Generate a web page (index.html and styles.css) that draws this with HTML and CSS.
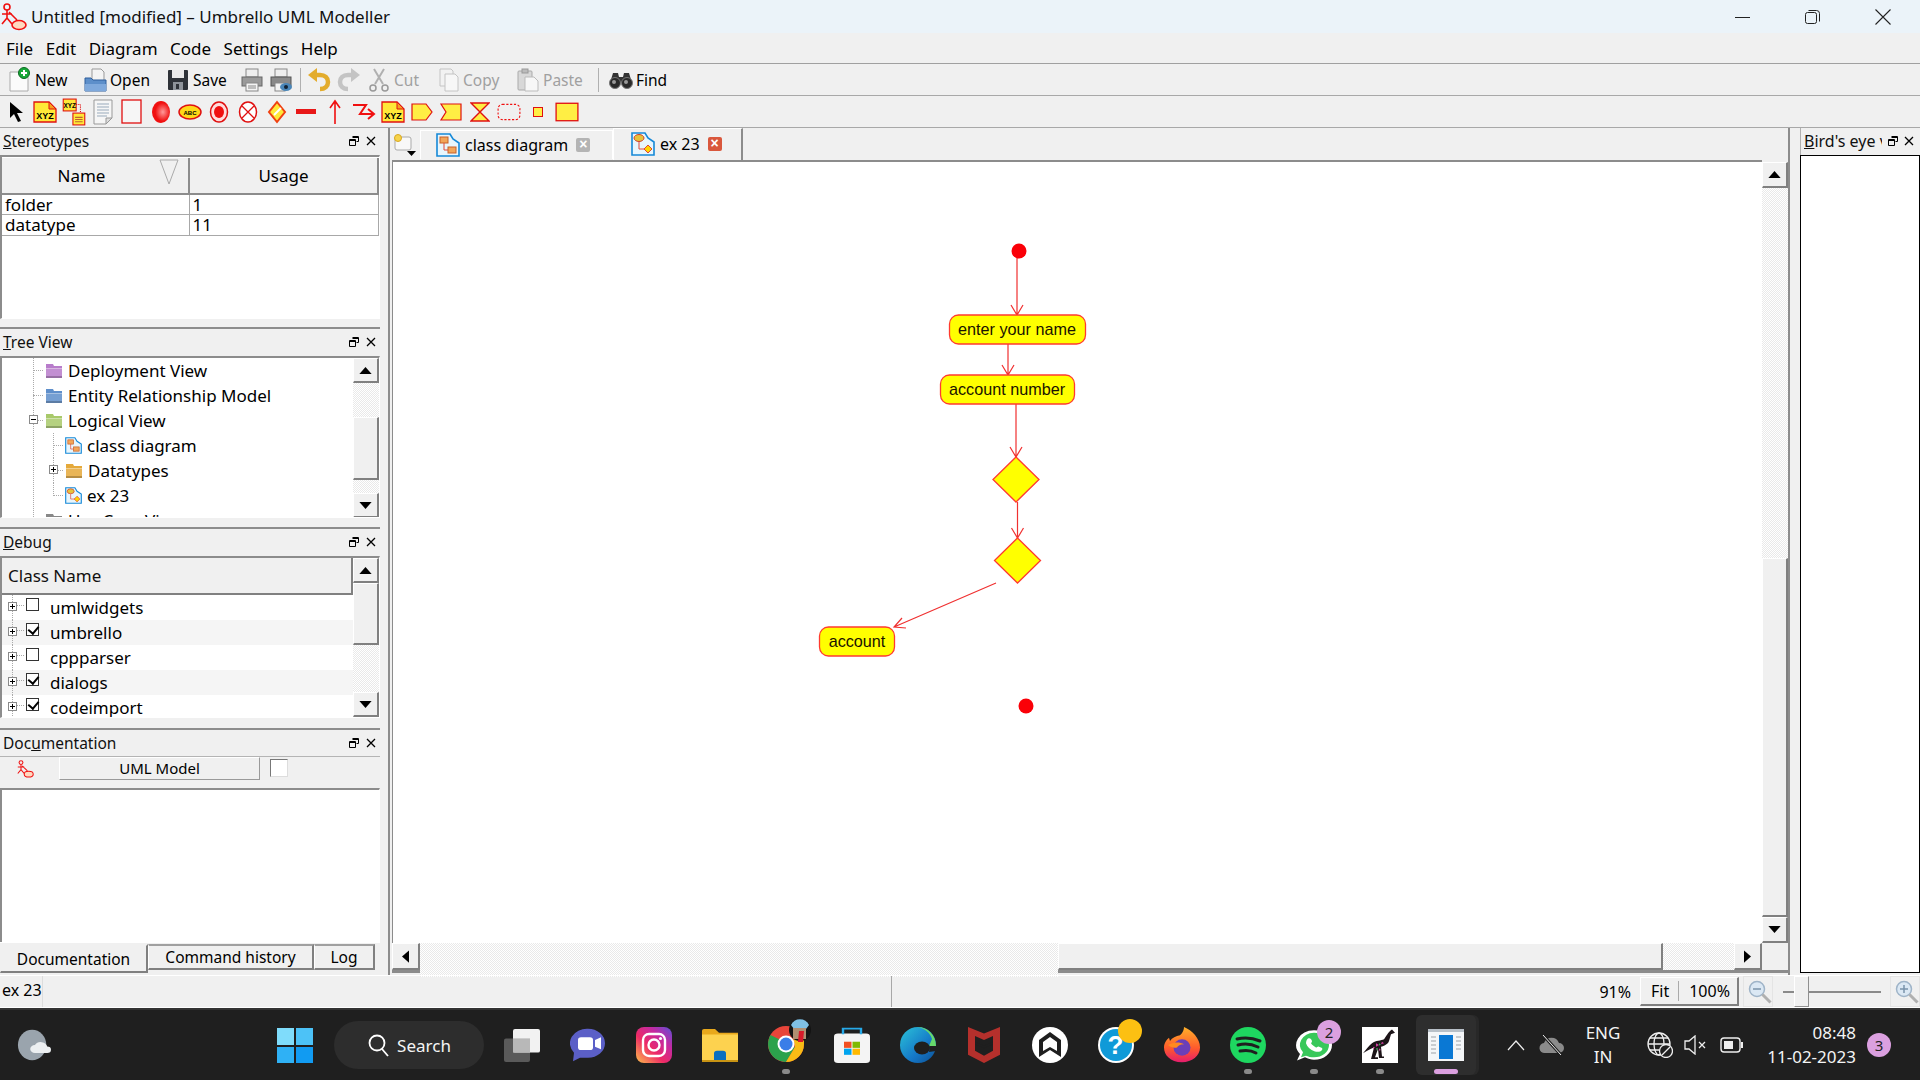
FILE: index.html
```html
<!DOCTYPE html>
<html lang="en">
<head>
<meta charset="UTF-8" />
<title>Untitled [modified] – Umbrello UML Modeller</title>
<link rel="stylesheet" href="styles.css">
</head>
<body>

<svg class="defs" width="0" height="0">
  <symbol id="logo" viewBox="0 0 26 28">
    <g fill="none" stroke="#f01010" stroke-width="1.6">
      <circle cx="6" cy="4" r="3"/>
      <path d="M6 7v8M1 11h10M6 15l-5 6M6 15l5 6M8 9l8 8"/>
      <ellipse cx="18" cy="22" rx="7" ry="4.5" fill="#ffd9c0"/>
    </g>
  </symbol>
  <symbol id="folder" viewBox="0 0 18 16">
    <path d="M1 1h7l1 2h8v12H1z" fill="currentColor"/>
    <path d="M1 5h16v1H1z" fill="#fff" opacity=".45"/>
    <path d="M1 6h16v9H1z" fill="#fff" opacity=".15"/>
    <path d="M1 13h16v2H1z" fill="#000" opacity=".22"/>
  </symbol>
  <symbol id="diagram-a" viewBox="0 0 24 24">
    <path d="M1 1h13l3 5 6 4v13H1z" fill="#e8f6fd" stroke="#1689d8" stroke-width="1.6"/>
    <rect x="4" y="4" width="8" height="6" fill="#f2a65a" stroke="#c8602a"/>
    <rect x="12" y="14" width="8" height="6" fill="#f2a65a" stroke="#c8602a"/>
    <path d="M8 10v7h4" fill="none" stroke="#e0483a"/>
  </symbol>
  <symbol id="diagram-b" viewBox="0 0 24 24">
    <path d="M1 1h13l3 5 6 4v13H1z" fill="#e8f6fd" stroke="#1689d8" stroke-width="1.6"/>
    <ellipse cx="8" cy="6" rx="5" ry="3.5" fill="#e6c23c" stroke="#d0402a"/>
    <path d="M8 10v7h6" fill="none" stroke="#e0483a"/>
    <path d="M17 13l4 4-4 4-4-4z" fill="#ffd400" stroke="#e0483a"/>
  </symbol>
  <symbol id="note" viewBox="0 0 24 22">
    <path d="M1 1h15l7 7v13H1z" fill="#ffe838" stroke="#e01010" stroke-width="1.300"/>
    <path d="M16 1v7h7z" fill="#f7a020" stroke="#e01010"/>
  </symbol>
  <symbol id="up" viewBox="0 0 14 8"><path d="M7 0l7 8H0z" fill="#000"/></symbol>
  <symbol id="float" viewBox="0 0 10 10">
    <path d="M3.500 .5h6v5h-2M.5 3.500h6v6h-6zM.5 4.500h6M3.500 1.500h6" fill="none" stroke="#000"/>
  </symbol>
  <symbol id="close" viewBox="0 0 10 10">
    <path d="M1 1l8 8M9 1l-8 8" fill="none" stroke="#000" stroke-width="1.300"/>
  </symbol>
</svg>

<header class="titlebar">
  <svg class="title-logo"><use href="#logo"/></svg>
  <span class="title-text">Untitled [modified] – Umbrello UML Modeller</span>
  <div class="win-controls">
    <svg width="16" height="16" viewBox="0 0 16 16"><path d="M0 8.500h15" stroke="#222"/></svg>
    <svg width="16" height="16" viewBox="0 0 16 16"><rect x=".5" y="3.500" width="11" height="11" rx="2" fill="none" stroke="#222"/><path d="M3.500 1.500h8a3 3 0 0 1 3 3v8" fill="none" stroke="#222"/></svg>
    <svg width="16" height="16" viewBox="0 0 16 16"><path d="M.5.500l15 15M15.500.500l-15 15" stroke="#222" stroke-width="1.100"/></svg>
  </div>
</header>

<nav class="menubar">
  <span>File</span><span>Edit</span><span>Diagram</span><span>Code</span><span>Settings</span><span>Help</span>
</nav>

<div class="toolbar main-tools">
  <div class="tool tool-new">
    <svg width="24" height="26" viewBox="0 0 24 26"><path d="M2 5h13l5 5v14H2z" fill="#fbfbfb" stroke="#aaa"/><circle cx="16" cy="6" r="5.500" fill="#18a838" stroke="#0a6a20"/><path d="M16 3v6M13 6h6" stroke="#fff" stroke-width="2"/></svg>
    <span>New</span>
  </div>
  <div class="tool tool-open">
    <svg width="24" height="24" viewBox="0 0 24 24"><path d="M8 1h9l3 3v10H8z" fill="#f4f4f4" stroke="#999"/><path d="M1 10h6l2 2h13v11H1z" fill="#5d8fca" stroke="#2f5f9c"/><path d="M1 16h21v7H1z" fill="#7fa9dc"/></svg>
    <span>Open</span>
  </div>
  <div class="tool tool-save">
    <svg width="22" height="22" viewBox="0 0 22 22"><rect x="1" y="1" width="20" height="20" rx="1" fill="#2e3238"/><rect x="5" y="1" width="12" height="8" fill="#e9e9e9"/><rect x="6" y="13" width="10" height="8" fill="#8e939a"/><rect x="9" y="15" width="3" height="5" fill="#2e3238"/></svg>
    <span>Save</span>
  </div>
  <svg class="tool-icon print-one" width="22" height="24" viewBox="0 0 22 24"><rect x="5" y="1" width="12" height="8" fill="#eee" stroke="#888"/><rect x="1" y="9" width="20" height="9" fill="#9a9a9a" stroke="#666"/><rect x="5" y="15" width="12" height="8" fill="#f4f4f4" stroke="#888"/><path d="M7 18h8M7 20h8" stroke="#888"/></svg>
  <svg class="tool-icon print-two" width="22" height="24" viewBox="0 0 22 24"><rect x="5" y="1" width="12" height="8" fill="#eee" stroke="#888"/><rect x="1" y="9" width="20" height="9" fill="#8a8a8a" stroke="#555"/><rect x="5" y="15" width="10" height="8" fill="#f4f4f4" stroke="#888"/><ellipse cx="16" cy="19" rx="6" ry="4" fill="#4a86b8"/><circle cx="16" cy="19" r="2" fill="#123"/></svg>
  <i class="tool-sep sep-one"></i>
  <svg class="tool-icon undo" width="24" height="24" viewBox="0 0 24 24"><path d="M7 7h6c5 0 8 3 8 7s-3 7-8 7" fill="none" stroke="#e3ac2c" stroke-width="4.500"/><path d="M10 0L1 7l9 7z" fill="#e3ac2c"/></svg>
  <svg class="tool-icon redo" width="24" height="24" viewBox="0 0 24 24"><path d="M17 7h-6c-5 0-8 3-8 7s3 7 8 7" fill="none" stroke="#c4c4c4" stroke-width="4.500"/><path d="M14 0l9 7-9 7z" fill="#c4c4c4"/></svg>
  <div class="tool tool-cut disabled">
    <svg width="22" height="24" viewBox="0 0 22 24"><path d="M6 1l9 15M16 1L7 16" stroke="#b0b0b0" stroke-width="2"/><circle cx="5" cy="20" r="3" fill="none" stroke="#999" stroke-width="1.500"/><circle cx="17" cy="20" r="3" fill="none" stroke="#999" stroke-width="1.500"/></svg>
    <span>Cut</span>
  </div>
  <div class="tool tool-copy disabled">
    <svg width="20" height="24" viewBox="0 0 20 24"><path d="M1 1h11l2 2v15H1z" fill="#f2f2f2" stroke="#c4c4c4"/><path d="M6 6h10l3 3v14H6z" fill="#f7f7f7" stroke="#c4c4c4"/></svg>
    <span>Copy</span>
  </div>
  <div class="tool tool-paste disabled">
    <svg width="22" height="24" viewBox="0 0 22 24"><rect x="1" y="3" width="14" height="19" rx="1" fill="#d8d8d8" stroke="#aaa"/><rect x="5" y="1" width="6" height="4" fill="#bbb" stroke="#999"/><path d="M8 9h9l4 4v10H8z" fill="#f7f7f7" stroke="#bbb"/></svg>
    <span>Paste</span>
  </div>
  <i class="tool-sep sep-two"></i>
  <div class="tool tool-find">
    <svg width="24" height="20" viewBox="0 0 24 20"><path d="M4 3h5l1 4h4l1-4h5l3 10H1z" fill="#333"/><circle cx="6" cy="13" r="5.500" fill="#2a2a2a" stroke="#777"/><circle cx="18" cy="13" r="5.500" fill="#2a2a2a" stroke="#777"/><circle cx="5" cy="12" r="2" fill="#999"/><circle cx="17" cy="12" r="2" fill="#999"/></svg>
    <span>Find</span>
  </div>
</div>

<div class="toolbar shape-tools">
  <b class="shape"><svg width="16" height="22" viewBox="0 0 16 22"><path d="M2 1v16l4-4 4 8 3-1-4-8h6z" fill="#000"/></svg></b>
  <b class="shape"><svg width="24" height="22" viewBox="0 0 24 22"><use href="#note" width="24" height="22"/><text x="12" y="18" class="xyz">XYZ</text></svg></b>
  <b class="shape"><svg width="24" height="28" viewBox="0 0 22 26"><rect x="1" y="1" width="12" height="11" fill="#ffe838" stroke="#e01010"/><text x="7" y="9.500" class="xyz small">XYZ</text><path d="M13 6h4v8" fill="none" stroke="#e01010" stroke-dasharray="1 1"/><rect x="10" y="14" width="11" height="11" fill="#ffe838" stroke="#e01010"/><path d="M12 18h7M12 20h7M12 22h7" stroke="#c06030"/></svg></b>
  <b class="shape"><svg width="20" height="26" viewBox="0 0 20 26"><path d="M1 1h18v18l-6 6H1z" fill="#f6f6f6" stroke="#999"/><path d="M4 5h12M4 8h12M4 11h12M4 14h12M4 17h10" stroke="#9ab"/><path d="M13 25v-6h6z" fill="#ddd" stroke="#999"/></svg></b>
  <b class="shape"><svg width="21" height="25" viewBox="0 0 21 25"><rect x="1" y="1" width="19" height="23" fill="#f6f6f6" stroke="#e01010" stroke-width="1.300"/></svg></b>
  <b class="shape"><svg width="20" height="24" viewBox="0 0 20 24"><defs><radialGradient id="ball" cx=".6" cy=".5" r=".7"><stop offset="0" stop-color="#ff9a9a"/><stop offset=".6" stop-color="#f01010"/></radialGradient></defs><ellipse cx="10" cy="12" rx="9" ry="11" fill="url(#ball)"/></svg></b>
  <b class="shape"><svg width="24" height="16" viewBox="0 0 24 16"><ellipse cx="12" cy="8" rx="11" ry="7" fill="#ffd818" stroke="#e01010" stroke-width="1.500"/><text x="12" y="10.500" class="xyz small">ABC</text></svg></b>
  <b class="shape"><svg width="20" height="22" viewBox="0 0 20 22"><ellipse cx="10" cy="11" rx="8.500" ry="10" fill="#fdd" stroke="#e01010" stroke-width="1.500"/><ellipse cx="10" cy="11" rx="5" ry="6" fill="#f01010"/></svg></b>
  <b class="shape"><svg width="20" height="22" viewBox="0 0 20 22"><ellipse cx="10" cy="11" rx="8.500" ry="10" fill="#fff" stroke="#e01010" stroke-width="1.500"/><path d="M4 5l12 12M16 5L4 17" stroke="#e01010" stroke-width="1.300"/></svg></b>
  <b class="shape"><svg width="20" height="24" viewBox="0 0 20 24"><path d="M10 2l8 10-8 10-8-10z" fill="#ffe838" stroke="#f04010" stroke-width="2"/><path d="M7 15l7-7" stroke="#fff" stroke-width="2"/></svg></b>
  <b class="shape"><svg width="22" height="8" viewBox="0 0 22 8"><rect x="1" y="1" width="20" height="5" fill="#e81818"/></svg></b>
  <b class="shape"><svg width="12" height="26" viewBox="0 0 12 26"><path d="M6 25V2M1 9l5-7 5 7" fill="none" stroke="#f01010" stroke-width="1.600"/></svg></b>
  <b class="shape"><svg width="24" height="18" viewBox="0 0 24 18"><path d="M1 2h13l-6 9h14M16 6l6 5-6 5" fill="none" stroke="#f01010" stroke-width="2"/></svg></b>
  <b class="shape"><svg width="24" height="22" viewBox="0 0 24 22"><use href="#note" width="24" height="22"/><text x="12" y="18" class="xyz">XYZ</text></svg></b>
  <b class="shape"><svg width="24" height="18" viewBox="0 0 22 18"><path d="M1 1h14l6 8-6 8H1z" fill="#ffee44" stroke="#e01010" stroke-width="1.200"/></svg></b>
  <b class="shape"><svg width="24" height="18" viewBox="0 0 22 18"><path d="M1 1h20v16H1l5-8z" fill="#ffee44" stroke="#e01010" stroke-width="1.200"/></svg></b>
  <b class="shape"><svg width="20" height="20" viewBox="0 0 20 20"><path d="M1 1h18L1 19h18z" fill="#ffee44" stroke="#e01010" stroke-width="1.400"/></svg></b>
  <b class="shape"><svg width="24" height="18" viewBox="0 0 22 16"><rect x="1" y="1" width="20" height="14" rx="4" fill="none" stroke="#f01010" stroke-dasharray="2 1.500"/></svg></b>
  <b class="shape"><svg width="10" height="10" viewBox="0 0 10 10"><rect x=".5" y=".5" width="9" height="9" fill="#ffee44" stroke="#e01010"/></svg></b>
  <b class="shape"><svg width="24" height="20" viewBox="0 0 22 18"><rect x="1" y="1" width="20" height="16" fill="#ffee44" stroke="#e01010" stroke-width="1.200"/></svg></b>
</div>

<div class="workspace">
  <aside class="left-docks">
    <section class="dock dock-first">
      <div class="dock-title"><span><u>S</u>tereotypes</span><svg><use href="#float"/></svg><svg><use href="#close"/></svg></div>
      <div class="dock-box stereo-box">
        <table class="stereo-table">
          <tr class="stereo-head"><th class="col-name">Name<svg class="sort-mark" width="20" height="26" viewBox="0 0 20 26"><path d="M1 1h18L10 25z" fill="none" stroke="#aaa"/></svg></th><th>Usage</th></tr>
          <tr><td>folder</td><td>1</td></tr>
          <tr><td>datatype</td><td>11</td></tr>
        </table>
      </div>
    </section>

    <section class="dock dock-tree">
      <div class="dock-title"><span><u>T</u>ree View</span><svg><use href="#float"/></svg><svg><use href="#close"/></svg></div>
      <div class="dock-box list-box">
        <div class="tree">
          <div class="tree-row"><svg class="folder purple"><use href="#folder"/></svg>Deployment View</div>
          <div class="tree-row"><svg class="folder blue"><use href="#folder"/></svg>Entity Relationship Model</div>
          <div class="tree-row"><i class="expander minus"></i><svg class="folder green"><use href="#folder"/></svg>Logical View</div>
          <div class="tree-row child"><svg class="diagram"><use href="#diagram-a"/></svg>class diagram</div>
          <div class="tree-row child"><i class="expander plus"></i><svg class="folder orange"><use href="#folder"/></svg>Datatypes</div>
          <div class="tree-row child last"><svg class="diagram"><use href="#diagram-b"/></svg>ex 23</div>
          <div class="tree-row cut-off"><svg class="folder grey"><use href="#folder"/></svg>Use Case View</div>
        </div>
        <div class="vscroll tree-scroll">
          <div class="sb-btn"><svg class="arrow"><use href="#up"/></svg></div>
          <div class="trough"></div>
          <div class="sb-thumb"></div>
          <div class="trough small"></div>
          <div class="sb-btn"><svg class="arrow flip"><use href="#up"/></svg></div>
        </div>
      </div>
    </section>

    <section class="dock dock-debug">
      <div class="dock-title"><span><u>D</u>ebug</span><svg><use href="#float"/></svg><svg><use href="#close"/></svg></div>
      <div class="dock-box list-box">
        <div class="debug-list">
          <div class="debug-head">Class Name</div>
          <div class="debug-row"><i class="expander plus"></i><i class="check"></i>umlwidgets</div>
          <div class="debug-row alt"><i class="expander plus"></i><i class="check on"></i>umbrello</div>
          <div class="debug-row"><i class="expander plus"></i><i class="check"></i>cppparser</div>
          <div class="debug-row alt"><i class="expander plus"></i><i class="check on"></i>dialogs</div>
          <div class="debug-row"><i class="expander plus"></i><i class="check on"></i>codeimport</div>
        </div>
        <div class="vscroll debug-scroll">
          <div class="sb-btn"><svg class="arrow"><use href="#up"/></svg></div>
          <div class="sb-thumb"></div>
          <div class="trough"></div>
          <div class="sb-btn"><svg class="arrow flip"><use href="#up"/></svg></div>
        </div>
      </div>
    </section>

    <section class="dock dock-doc">
      <div class="dock-title"><span>Doc<u>u</u>mentation</span><svg><use href="#float"/></svg><svg><use href="#close"/></svg></div>
      <div class="doc-head">
        <svg class="doc-logo"><use href="#logo"/></svg>
        <div class="doc-name">UML Model</div>
        <i class="doc-check"></i>
      </div>
      <div class="dock-box doc-box"></div>
    </section>

    <div class="bottom-tabs">
      <span class="btab active">Documentation</span>
      <span class="btab tab-cmd">Command history</span>
      <span class="btab tab-log">Log</span>
    </div>
  </aside>

  <main class="central">
    <div class="tabbar">
      <div class="new-tab">
        <svg width="26" height="24" viewBox="0 0 26 24"><rect x="3" y="4" width="16" height="13" rx="2" fill="#f8f8f8" stroke="#aaa"/><circle cx="6" cy="5" r="3.500" fill="#f6d34a" stroke="#d8a820"/><path d="M15 18h9l-4.500 5z" fill="#000"/></svg>
      </div>
      <div class="dtab dtab-one">
        <svg class="tab-icon"><use href="#diagram-a"/></svg>
        <span>class diagram</span>
        <i class="tab-close"></i>
      </div>
      <div class="dtab dtab-two">
        <svg class="tab-icon"><use href="#diagram-b"/></svg>
        <span>ex 23</span>
        <i class="tab-close red"></i>
      </div>
    </div>
    <div class="view-grid">
      <div class="canvas">
        <svg class="diagram-svg" viewBox="392 160 1370 783">
          <g class="edges">
            <path d="M1017 258V315M1011 305l6 10 6-10"/>
            <path d="M1008 344V375M1002 365l6 10 6-10"/>
            <path d="M1016 404V457M1010 447l6 10 6-10"/>
            <path d="M1017.500 502V538M1011.500 528l6 10 6-10"/>
            <path d="M996 583L894 627M902 618l-8 9 12 1"/>
          </g>
          <circle class="dot" cx="1019" cy="251" r="7.500"/>
          <circle class="dot" cx="1026" cy="706" r="7.500"/>
          <rect class="node" x="949.500" y="315" width="136" height="29" rx="9"/>
          <text class="node-label" x="1017" y="335">enter your name</text>
          <rect class="node" x="940.500" y="375" width="134" height="29" rx="9"/>
          <text class="node-label" x="1007" y="395">account number</text>
          <path class="node" d="M1016 457l23 22.500-23 22.500-23-22.500z"/>
          <path class="node" d="M1017.500 538l23 22.500-23 22.500-23-22.500z"/>
          <rect class="node" x="819.500" y="627" width="75" height="29" rx="9"/>
          <text class="node-label" x="857" y="647">account</text>
        </svg>
      </div>
      <div class="vscroll view-vscroll">
        <div class="sb-btn"><svg class="arrow"><use href="#up"/></svg></div>
        <div class="trough grow"></div>
        <div class="sb-thumb view-thumb"></div>
        <div class="sb-btn"><svg class="arrow flip"><use href="#up"/></svg></div>
      </div>
      <div class="hscroll">
        <div class="sb-btn"><svg class="arrow rot-left"><use href="#up"/></svg></div>
        <div class="trough grow"></div>
        <div class="sb-thumb h-thumb"></div>
        <div class="trough h-end"></div>
        <div class="sb-btn"><svg class="arrow rot-right"><use href="#up"/></svg></div>
      </div>
    </div>
  </main>

  <aside class="birds-eye">
    <div class="dock-title"><span class="bird-text"><u>B</u>ird's eye view</span><svg><use href="#float"/></svg><svg><use href="#close"/></svg></div>
    <div class="bird-box"></div>
  </aside>
</div>

<footer class="statusbar">
  <span class="status-msg">ex 23</span>
  <span class="status-mid"><span class="zoom-pct">91%</span></span>
  <div class="zoom-buttons"><span class="zb-fit">Fit</span><span>100%</span></div>
  <span class="mag">
    <svg width="26" height="26" viewBox="0 0 26 26"><circle cx="10" cy="10" r="7.500" fill="#dbe8f4" stroke="#9fb4c8" stroke-width="1.500"/><path d="M6 10h8" stroke="#7a93aa" stroke-width="1.500"/><path d="M15.500 15.500l8 8" stroke="#b0b0b0" stroke-width="3"/></svg>
  </span>
  <div class="zoom-slider"><i class="slider-line"></i><i class="slider-thumb"></i></div>
  <span class="mag">
    <svg width="26" height="26" viewBox="0 0 26 26"><circle cx="10" cy="10" r="7.500" fill="#dbe8f4" stroke="#9fb4c8" stroke-width="1.500"/><path d="M6 10h8M10 6v8" stroke="#7a93aa" stroke-width="1.500"/><path d="M15.500 15.500l8 8" stroke="#b0b0b0" stroke-width="3"/></svg>
  </span>
</footer>

<div class="taskbar">
  <div class="tb-weather">
    <svg width="34" height="32" viewBox="0 0 36 40" preserveAspectRatio="none"><ellipse cx="16" cy="20" rx="15" ry="19" fill="#9aa4ad"/><path d="M19 30a5 5 0 0 1 0-10 7 7 0 0 1 13 2 4 4 0 0 1 0 8z" fill="#eceff1"/></svg>
  </div>
  <div class="tb-cell">
    <svg width="36" height="36" viewBox="0 0 36 36"><path d="M0 1h17v17H0z" fill="#7fdcfb"/><path d="M19 1h17v17H19z" fill="#4cc2f7"/><path d="M0 20h17v16H0z" fill="#2fb1f5"/><path d="M19 20h17v16H19z" fill="#119bf2"/></svg>
  </div>
  <div class="tb-search">
    <svg width="22" height="24" viewBox="0 0 22 24"><circle cx="10" cy="10" r="7.500" fill="none" stroke="#fff" stroke-width="1.800"/><path d="M15 16l6 7" stroke="#fff" stroke-width="1.800"/></svg>
    <span>Search</span>
  </div>
  <div class="tb-cell tb-view">
    <svg width="36" height="34" viewBox="0 0 36 36" preserveAspectRatio="none"><rect x="0" y="11" width="26" height="25" rx="2" fill="#5a5a5a"/><rect x="9" y="1" width="27" height="25" rx="2" fill="#f2f2f2"/><rect x="9" y="11" width="17" height="15" fill="#b8b8b8"/></svg>
  </div>
  <div class="tb-cell">
    <svg width="36" height="34" viewBox="0 0 36 40" preserveAspectRatio="none"><path d="M18 1a17 17 0 0 1 0 34H10L3 39l1-10A17 17 0 0 1 18 1z" fill="#5b5fc7"/><rect x="8" y="11" width="15" height="15" rx="3" fill="#fff"/><path d="M25 14l6-3v14l-6-3z" fill="#fff"/></svg>
  </div>
  <div class="tb-cell">
    <svg width="36" height="36" viewBox="0 0 36 36"><defs><linearGradient id="insta" x1="0" y1="1" x2="1" y2="0"><stop offset="0" stop-color="#fdc04a"/><stop offset=".4" stop-color="#ee2a66"/><stop offset=".7" stop-color="#c32aa3"/><stop offset="1" stop-color="#5b51d8"/></linearGradient></defs><rect width="36" height="36" rx="8" fill="url(#insta)"/><rect x="7" y="7" width="22" height="22" rx="6" fill="none" stroke="#fff" stroke-width="2.400"/><circle cx="18" cy="18" r="5.500" fill="none" stroke="#fff" stroke-width="2.400"/><circle cx="24.500" cy="11.500" r="1.600" fill="#fff"/></svg>
  </div>
  <div class="tb-cell">
    <svg width="36" height="34" viewBox="0 0 36 36" preserveAspectRatio="none"><path d="M0 3a2 2 0 0 1 2-2h11l4 4h19v31H0z" fill="#e8a81c"/><path d="M0 7h36v29H0z" fill="#fdd24f"/><path d="M12 27a3 3 0 0 1 3-3h6a3 3 0 0 1 3 3v9H12z" fill="#0a6fc0"/><path d="M0 34h36v2H0z" fill="#c89414"/></svg>
  </div>
  <div class="tb-cell">
    <svg class="tb-over" width="44" height="44" viewBox="0 0 44 44"><circle cx="18" cy="26" r="18" fill="#e8453a"/><path d="M2.500 17A18 18 0 0 0 18 44l9-15z" fill="#2ba24c"/><path d="M36 26a18 18 0 0 1-18 18l9-15-2-11h11z" fill="#f9bc15"/><circle cx="18" cy="26" r="8.500" fill="#fff"/><circle cx="18" cy="26" r="6.500" fill="#3a7ee8"/><circle cx="32" cy="12" r="11" fill="#141414"/><path d="M23 7a10 10 0 0 1 18 0l-3 4H26z" fill="#7fc0e4"/><rect x="25" y="10" width="13" height="11" fill="#b08f72"/><path d="M31 13h5l-1 11h-5z" fill="#d81a2a"/></svg>
    <i class="running"></i>
  </div>
  <div class="tb-cell">
    <svg width="36" height="36" viewBox="0 0 36 44" preserveAspectRatio="none"><rect y="8" width="36" height="36" rx="4" fill="#f4f4f4"/><path d="M9 9V2h18v7" fill="none" stroke="#27a9e8" stroke-width="2.400"/><rect x="10" y="18" width="7.500" height="7.500" fill="#f25022"/><rect x="18.500" y="18" width="7.500" height="7.500" fill="#7fba00"/><rect x="10" y="26.500" width="7.500" height="7.500" fill="#00a4ef"/><rect x="18.500" y="26.500" width="7.500" height="7.500" fill="#ffb900"/></svg>
  </div>
  <div class="tb-cell">
    <svg width="36" height="36" viewBox="0 0 36 36"><defs><linearGradient id="edge" x1="0" y1="0" x2="1" y2="1"><stop offset="0" stop-color="#2bc3d8"/><stop offset=".6" stop-color="#1578c8"/><stop offset="1" stop-color="#0d4f92"/></linearGradient></defs><circle cx="18" cy="18" r="18" fill="url(#edge)"/><path d="M36 19C36 8 28 0 17 0c8 1 13 6 15 12l-3 7z" fill="#67d86a"/><ellipse cx="22" cy="21" rx="8" ry="6.500" fill="#1f1f1f"/><path d="M30 19h6v5l-7 1z" fill="#1f1f1f"/></svg>
  </div>
  <div class="tb-cell">
    <svg width="32" height="36" viewBox="0 0 32 44" preserveAspectRatio="none"><path d="M0 0l16 8 16-8v34l-16 10L0 34z" fill="#b5302c"/><path d="M7 11l9 5 9-5v18l-9 6-9-6z" fill="#1f1f1f"/><path d="M7 18l9 5 9-5v3l-9 5-9-5z" fill="#1f1f1f"/></svg>
  </div>
  <div class="tb-cell">
    <svg width="36" height="36" viewBox="0 0 36 36"><circle cx="18" cy="18" r="18" fill="#fff"/><path d="M18 5l11 8v17l-11-7-11 7V13z" fill="#1f1f1f"/><path d="M18 10l7 5v9l-7-4-7 4v-9z" fill="#fff"/></svg>
  </div>
  <div class="tb-cell">
    <svg class="tb-over" width="44" height="46" viewBox="0 0 44 46"><circle cx="18" cy="28" r="18" fill="#fff"/><circle cx="18" cy="28" r="16" fill="#0f9ad8"/><text class="help-mark" x="17.500" y="37">?</text><circle cx="32" cy="14" r="12" fill="#fcc012"/></svg>
  </div>
  <div class="tb-cell">
    <svg width="36" height="36" viewBox="0 0 36 44" preserveAspectRatio="none"><defs><linearGradient id="fox" x1="0" y1="0" x2="0" y2="1"><stop offset="0" stop-color="#ffb129"/><stop offset=".6" stop-color="#ff5a2c"/><stop offset="1" stop-color="#e51d6d"/></linearGradient></defs><path d="M18 43C6 43 0 34 0 25c0-6 3-10 5-12l1 4c2-4 6-6 10-7 3-3 4-7 4-10 8 4 16 14 16 25 0 10-8 18-18 18z" fill="url(#fox)"/><ellipse cx="18" cy="25" rx="8.500" ry="10" fill="#6b3fb8"/><path d="M4 22c5-4 12-4 16-1-4 0-6 2-7 4-3 1-6 0-9-3z" fill="#ff8a1f"/></svg>
  </div>
  <div class="tb-cell">
    <svg width="36" height="36" viewBox="0 0 36 36"><circle cx="18" cy="18" r="18" fill="#1ed760"/><path d="M7 12c8-2 16-1 23 2M8 18c7-2 14-1 20 2M10 24c5-1 11-1 16 2" fill="none" stroke="#1f1f1f" stroke-width="3" stroke-linecap="round"/></svg>
    <i class="running"></i>
  </div>
  <div class="tb-cell">
    <svg width="36" height="36" viewBox="0 0 36 44" preserveAspectRatio="none"><path d="M18 4a18 18 0 0 1 0 36c-3 0-6-1-9-3l-8 4 3-8A18 18 0 0 1 18 4z" fill="#fff"/><path d="M18 7a15 15 0 0 1 0 30c-3 0-6-1-8-2l-5 2 2-6A15 15 0 0 1 18 7z" fill="#38c85a"/><path d="M12 14c2-1 3 0 4 3 0 2-1 2-1 3 1 2 3 4 5 5 1 0 2-2 3-1 3 1 4 2 3 4-1 2-4 3-7 2-5-2-8-6-9-10 0-3 1-5 2-6z" fill="#fff"/></svg>
    <span class="tb-badge wa-badge">2</span>
    <i class="running"></i>
  </div>
  <div class="tb-cell">
    <svg width="36" height="36" viewBox="0 0 36 44" preserveAspectRatio="none"><rect width="36" height="44" fill="#fff"/><path d="M30 3l3 4-4 2-2 8c-1 4-5 6-8 7l1 12h2v2h-5l-1-11-3 10h3v2H9l3-14C8 27 4 30 1 32c3-4 6-9 9-12 4-4 9-3 12-5 2-3 4-9 8-12z" fill="#1c1418"/><path d="M14 20l3 2-3 2zM20 18l2 2-3 1zM11 24l2 1-2 2zM17 26l2 2-2 1z" fill="#d040a0"/><path d="M17 20l2 1-2 2zM14 26l2 0-1 3z" fill="#40b060"/></svg>
    <i class="running"></i>
  </div>
  <div class="tb-cell">
    <div class="tb-active">
      <svg width="36" height="32" viewBox="0 0 36 32"><rect width="36" height="32" fill="#f4f6f8"/><rect width="36" height="3" fill="#b8c0c8"/><rect x="11" y="6" width="14" height="24" fill="#0a78d4"/><path d="M3 8h5M3 12h5M3 16h5M3 20h5M3 24h5M28 8h5M28 12h5M28 16h5M28 20h5" stroke="#c8ccd0" stroke-width="2"/></svg>
      <i class="active-mark"></i>
    </div>
  </div>
  <div class="tray">
    <div class="tray-cell"><svg width="18" height="12" viewBox="0 0 18 12"><path d="M1 11l8-9 8 9" fill="none" stroke="#eee" stroke-width="1.200"/></svg></div>
    <div class="tray-cell"><svg width="26" height="22" viewBox="0 0 26 22"><path d="M6 19a5 5 0 0 1-1-10 8 8 0 0 1 15 0 5 5 0 0 1 0 10z" fill="#8a8a8a"/><path d="M4 1l18 20" stroke="#1f1f1f" stroke-width="3"/><path d="M4 1l18 20" stroke="#eee" stroke-width="1"/></svg></div>
    <div class="tray-lang"><span>ENG</span><span>IN</span></div>
    <div class="tray-cell tray-globe"><svg width="26" height="26" viewBox="0 0 26 26"><g fill="none" stroke="#eee" stroke-width="1.300"><circle cx="12" cy="12" r="11"/><ellipse cx="12" cy="12" rx="5" ry="11"/><path d="M1 12h22M3 6h18M3 18h18"/></g><circle cx="19" cy="19" r="6.500" fill="#1f1f1f" stroke="#eee" stroke-width="1.300"/><path d="M15 23l8-8" stroke="#eee" stroke-width="1.300"/></svg></div>
    <div class="tray-cell"><svg width="24" height="20" viewBox="0 0 24 20"><path d="M1 6h4l6-5v18l-6-5H1z" fill="none" stroke="#eee" stroke-width="1.300"/><path d="M15 7l6 6M21 7l-6 6" stroke="#eee" stroke-width="1.300"/></svg></div>
    <div class="tray-cell"><svg width="24" height="16" viewBox="0 0 24 16"><rect x="1" y="1" width="19" height="14" rx="3" fill="none" stroke="#eee" stroke-width="1.400"/><rect x="4" y="4" width="9" height="8" fill="#eee"/><rect x="21" y="5" width="2" height="6" fill="#eee"/></svg></div>
    <div class="clock"><span>08:48</span><span>11-02-2023</span></div>
    <span class="tb-badge note-badge">3</span>
  </div>
</div>

</body>
</html>
```

FILE: styles.css
```css
* {
  box-sizing: border-box;
}
html, body {
  margin: 0;
  height: 100%;
}
body {
  width: 1920px;
  height: 1080px;
  overflow: hidden;
  display: flex;
  flex-direction: column;
  background-color: #f0f0f0;
  color: #000;
  font-family: 'Noto Sans', 'Open Sans', sans-serif;
  font-size: 16px;
}
.defs {
  position: absolute;
}
svg {
  display: block;
  flex: none;
}
i, b {
  display: block;
  flex: none;
}

/* title + menu */
.titlebar {
  height: 33px;
  flex: none;
  display: flex;
  align-items: center;
  background-color: #ebf3f9;
  padding-left: 1px;
}
.title-logo {
  width: 26px;
  height: 28px;
}
.title-text {
  margin-left: 4px;
  font-size: 17px;
  color: #111;
}
.win-controls {
  margin-left: auto;
  display: flex;
  gap: 54px;
  padding-right: 29px;
}
.win-controls svg {
  width: 16px;
  height: 16px;
}
.menubar {
  height: 31px;
  flex: none;
  display: flex;
  align-items: center;
  gap: 12.500px;
  padding: 0 0 0 6px;
  font-size: 17px;
  border-bottom: 1px solid #a0a0a0;
}

/* toolbars */
.toolbar {
  height: 32px;
  flex: none;
  display: flex;
  align-items: center;
  border-bottom: 1px solid #a8a8a8;
}
.main-tools {
  padding-left: 8px;
  font-size: 15.500px;
}
.tool {
  display: flex;
  align-items: center;
  gap: 3px;
  flex: none;
}
.disabled {
  color: #a0a0a0;
}
.tool-new { width: 76px; }
.tool-open { width: 83px; gap: 2px; }
.tool-save { width: 74px; gap: 4px; }
.print-one { margin-right: 7px; }
.print-two { margin-right: 8px; }
.tool-sep {
  width: 1px;
  height: 24px;
  background-color: #b0b0b0;
}
.undo { margin: 0 6px 0 6px; }
.redo { margin-right: 7px; }
.tool-cut { width: 71px; gap: 4px; }
.tool-copy { width: 78px; gap: 4px; }
.tool-paste { width: 81px; gap: 4px; }
.sep-two { margin-right: 10px; }
.shape-tools {
  padding-left: 1px;
}
.shape {
  width: 29px;
  display: flex;
  justify-content: center;
  align-items: center;
}
.xyz {
  font-family: 'Liberation Sans', sans-serif;
  font-weight: 700;
  font-size: 9px;
  text-anchor: middle;
}
.xyz.small {
  font-size: 6px;
}

/* workspace */
.workspace {
  height: 847px;
  flex: none;
  display: flex;
}
.left-docks {
  width: 390px;
  flex: none;
  padding-right: 8px;
  display: flex;
  flex-direction: column;
  border-right: 2px solid #8c8c8c;
}
.dock {
  flex: none;
  width: 380px;
  border-top: 2px solid #8c8c8c;
}
.dock-first {
  border-top: 0;
  height: 199px;
}
.dock-tree {
  height: 200px;
}
.dock-debug {
  height: 201px;
}
.dock-doc {
  height: 214px;
}
.dock-title {
  height: 27px;
  display: flex;
  align-items: center;
  padding: 0 4px 1px 3px;
  gap: 7px;
  font-size: 15.500px;
  color: #111;
}
.dock-title > span {
  margin-right: auto;
}
.dock-title svg {
  width: 10px;
  height: 10px;
}
.dock-doc .dock-title {
  height: 26px;
}
.dock-box {
  background-color: #fff;
  border-top: 2px solid #8c8c8c;
  border-left: 2px solid #8c8c8c;
  border-right: 1px solid #fff;
  border-bottom: 1px solid #fff;
}
.stereo-box {
  height: 164px;
  padding-top: 1px;
}
.stereo-table {
  width: 377px;
  border-collapse: collapse;
  table-layout: fixed;
  font-size: 17px;
}
.stereo-table th {
  height: 36px;
  font-weight: 400;
  background-color: #f0f0f0;
  border-right: 2px solid #8c8c8c;
  border-bottom: 2px solid #8c8c8c;
  position: relative;
}
.col-name {
  width: 187px;
  padding: 0 27px 0 0;
}
.sort-mark {
  position: absolute;
  top: 1px;
  right: 9px;
}
.stereo-table td {
  height: 20.500px;
  line-height: 19px;
  padding: 0 0 0 3px;
  border-bottom: 1px solid #a8a8a8;
  border-right: 1px solid #a8a8a8;
}
.list-box {
  height: 162px;
  display: flex;
  overflow: hidden;
}

/* tree */
.tree {
  flex: 1;
  position: relative;
  overflow: hidden;
  font-size: 17px;
  background-image: linear-gradient(#aaa 50%, transparent 50%);
  background-size: 1px 2px;
  background-repeat: repeat-y;
  background-position: 31px 0;
}
.tree-row {
  height: 25px;
  display: flex;
  align-items: center;
  padding-left: 43px;
  position: relative;
  white-space: nowrap;
}
.tree-row::before {
  content: "";
  position: absolute;
  left: 31px;
  top: 12px;
  width: 10px;
  border-top: 1px dotted #aaa;
}
.tree-row.child {
  padding-left: 63px;
}
.tree-row.child::before {
  left: 51px;
}
.tree-row.child::after {
  content: "";
  position: absolute;
  left: 51px;
  top: 0;
  bottom: 0;
  border-left: 1px dotted #aaa;
}
.tree-row.child.last::after {
  bottom: 12px;
}
.folder {
  width: 18px;
  height: 16px;
  margin-right: 5px;
}
.diagram {
  width: 17px;
  height: 17px;
  margin-right: 5px;
}
.purple { color: #b87ccb; }
.blue { color: #5f8fcb; }
.green { color: #a8c96a; }
.orange { color: #e5a93a; }
.grey { color: #888; }
.expander {
  width: 9px;
  height: 9px;
  border: 1px solid #8a8a8a;
  background: linear-gradient(#000, #000) center / 5px 1px no-repeat, #fff;
}
.expander.plus {
  background: linear-gradient(#000, #000) center / 5px 1px no-repeat, linear-gradient(#000, #000) center / 1px 5px no-repeat, #fff;
}
.tree-row .expander {
  position: absolute;
  left: 27px;
  top: 7px;
  z-index: 1;
}
.tree-row.child .expander {
  left: 47px;
}

/* scrollbars */
.vscroll {
  width: 26px;
  flex: none;
  display: flex;
  flex-direction: column;
}
.sb-btn {
  height: 25px;
  flex: none;
  display: flex;
  align-items: center;
  justify-content: center;
  background-color: #f0f0f0;
  border: 1px solid;
  border-color: #fff #808080 #808080 #fff;
  border-width: 1px 2px 2px 1px;
}
.arrow {
  width: 13px;
  height: 7px;
}
.arrow.flip {
  transform: rotate(180deg);
}
.arrow.rot-left {
  transform: rotate(-90deg);
}
.arrow.rot-right {
  transform: rotate(90deg);
}
.trough {
  height: 34px;
  flex: none;
  background: repeating-conic-gradient(#e9e9e9 0 25%, #fff 0 50%) 0 0 / 2px 2px;
}
.trough.small {
  height: 13px;
}
.trough.grow {
  flex: 1;
}
.sb-thumb {
  height: 63px;
  flex: none;
  background-color: #f0f0f0;
  border: 1px solid;
  border-color: #fff #808080 #808080 #fff;
  border-width: 1px 2px 2px 1px;
}
.debug-scroll .sb-thumb {
  height: 62px;
}
.debug-scroll .trough {
  flex: 1;
  height: auto;
}

/* debug list */
.debug-list {
  flex: 1;
  overflow: hidden;
  font-size: 17px;
}
.debug-head {
  height: 37px;
  padding: 0 6px;
  display: flex;
  align-items: center;
  background-color: #f0f0f0;
  border-right: 2px solid #808080;
  border-bottom: 2px solid #808080;
  color: #111;
}
.debug-row {
  height: 25px;
  display: flex;
  align-items: center;
  padding-left: 6px;
  position: relative;
  background-image: linear-gradient(#aaa 50%, transparent 50%);
  background-size: 1px 2px;
  background-repeat: repeat-y;
  background-position: 10px 0;
}
.debug-row::before {
  content: "";
  position: absolute;
  left: 12px;
  top: 10px;
  width: 10px;
  border-top: 1px dotted #aaa;
}
.debug-row.alt {
  background-color: #f5f5f5;
}
.debug-row .expander {
  margin-top: -3px;
  z-index: 1;
}
.check {
  width: 13px;
  height: 13px;
  margin: -6px 11px 0 9px;
  border: 1px solid #333;
  background-color: #fff;
  position: relative;
  z-index: 1;
}
.check.on::after {
  content: "";
  position: absolute;
  left: 3px;
  top: 0;
  width: 5px;
  height: 8px;
  border: solid #000;
  border-width: 0 2px 2px 0;
  transform: rotate(40deg);
}

/* documentation */
.doc-head {
  height: 32px;
  display: flex;
  align-items: flex-start;
  padding-left: 17px;
  border-top: 1px solid #b4b4b4;
}
.doc-logo {
  width: 17px;
  height: 18px;
  margin-top: 3px;
}
.doc-name {
  width: 201px;
  height: 23px;
  margin-left: 25px;
  font-size: 15px;
  text-align: center;
  line-height: 20px;
  border: 1px solid;
  border-color: #fff #9a9a9a #9a9a9a #fff;
}
.doc-check {
  width: 18px;
  height: 18px;
  margin: 2px 0 0 10px;
  background-color: #fff;
  border: 1px solid;
  border-color: #777 #ddd #ddd #777;
}
.doc-box {
  height: 155px;
}
.bottom-tabs {
  flex: none;
  width: 380px;
  height: 32px;
  display: flex;
  font-size: 15.500px;
  padding-top: 1px;
  border-top: 1px solid #fff;
}
.btab {
  height: 26px;
  display: flex;
  align-items: center;
  justify-content: center;
  border: 1px solid;
  border-color: #a0a0a0 #808080 #808080 #fff;
  border-width: 2px 2px 2px 1px;
}
.btab.active {
  width: 148px;
  height: 29px;
  padding-top: 1px;
  border-color: #f0f0f0 #808080 #808080 #f0f0f0;
}
.tab-cmd {
  width: 166px;
}
.tab-log {
  width: 61px;
}

/* central area */
.central {
  flex: none;
  width: 1400px;
  display: flex;
  flex-direction: column;
  border-right: 2px solid #8c8c8c;
}
.tabbar {
  height: 32px;
  flex: none;
  display: flex;
  align-items: flex-end;
}
.new-tab {
  width: 30px;
  height: 30px;
  padding: 3px 0 0 2px;
}
.dtab {
  display: flex;
  align-items: center;
  height: 29px;
  border: 1px solid #fff;
  border-bottom: 0;
}
.dtab-one {
  width: 193px;
  padding-left: 15px;
  margin-bottom: 1px;
}
.dtab-two {
  width: 130px;
  height: 32px;
  padding-left: 17px;
  padding-bottom: 2px;
  border-right: 2px solid #8c8c8c;
}
.tab-icon {
  width: 24px;
  height: 24px;
  margin-right: 5px;
}
.tab-close {
  width: 14px;
  height: 14px;
  margin-left: 8px;
  border-radius: 2px;
  background-color: #b4b4b4;
  position: relative;
}
.tab-close.red {
  background-color: #d9573c;
}
.tab-close::after {
  content: "×";
  position: absolute;
  inset: 0;
  color: #fff;
  font: 700 14px/13px 'Liberation Sans', sans-serif;
  text-align: center;
}
.view-grid {
  height: 813px;
  flex: none;
  margin-left: 2px;
  display: grid;
  grid-template-columns: 1370px 26px;
  grid-template-rows: 783px 27px;
  border-bottom: 3px solid #8c8c8c;
}
.canvas {
  background-color: #fff;
  border-top: 2px solid #8c8c8c;
  border-left: 1px solid #8c8c8c;
  overflow: hidden;
}
.diagram-svg {
  width: 1370px;
  height: 783px;
  margin: -2px 0 0 -1px;
}
.edges path {
  fill: none;
  stroke: #f03030;
  stroke-width: 1.200;
}
.dot {
  fill: #fa0008;
}
.node {
  fill: #ffff00;
  stroke: #ff3a30;
  stroke-width: 1.300;
}
.node-label {
  font-family: 'Liberation Sans', sans-serif;
  font-size: 16.200px;
  text-anchor: middle;
  fill: #1a1200;
}
.view-vscroll {
  padding-top: 2px;
}
.view-vscroll .sb-btn {
  height: 26px;
}
.view-thumb {
  height: 359px;
}
.hscroll {
  display: flex;
  background-color: #f0f0f0;
}
.hscroll .sb-btn {
  width: 28px;
  height: 27px;
}
.h-thumb {
  width: 605px;
  height: 27px;
}
.h-end {
  width: 71px;
  height: 27px;
}
.birds-eye {
  flex: 1;
  padding-left: 10px;
  display: flex;
  flex-direction: column;
}
.birds-eye .dock-title {
  overflow: hidden;
  gap: 6px;
  border-left: 1px solid #b0b0b0;
  padding: 0 6px 1px 3px;
  font-size: 16px;
}
.bird-text {
  width: 78px;
  flex: none;
  overflow: hidden;
  white-space: nowrap;
}
.bird-box {
  flex: 1;
  margin-bottom: 2px;
  background-color: #fff;
  border: 1px solid #000;
}

/* status bar */
.statusbar {
  height: 33px;
  flex: none;
  display: flex;
  align-items: center;
  border-top: 1px solid #fff;
  border-bottom: 1px solid #fff;
}
.status-msg {
  width: 46px;
  height: 100%;
  padding-left: 2px;
  line-height: 29px;
  border-right: 1px solid #ddd;
}
.status-mid {
  margin-left: 848px;
  flex: 0 0 749px;
  height: 100%;
  display: flex;
  align-items: center;
  justify-content: flex-end;
  padding-right: 9px;
  border-left: 1px solid #a8a8a8;
}
.zoom-buttons {
  width: 99px;
  height: 29px;
  flex: none;
  display: flex;
  align-items: center;
  justify-content: space-around;
  padding: 0 2px 0 5px;
  border: 1px solid;
  border-color: #fff #808080 #808080 #fff;
  border-width: 1px 2px 2px 1px;
}
.zb-fit {
  padding-right: 9px;
  border-right: 1px solid #aaa;
  line-height: 20px;
}
.mag {
  width: 30px;
  height: 31px;
  margin-left: 4px;
  padding-left: 4px;
  flex: none;
  display: flex;
  align-items: center;
  justify-content: center;
  border: 1px solid #e4e4e4;
}
.zoom-slider {
  width: 102px;
  height: 31px;
  margin: 0 3px 0 8px;
  flex: none;
  position: relative;
}
.slider-line {
  position: absolute;
  left: 2px;
  right: 2px;
  top: 15px;
  height: 2px;
  background-color: #8a8a8a;
}
.slider-thumb {
  position: absolute;
  left: 13px;
  top: 0;
  width: 15px;
  height: 31px;
  background-color: #f0f0f0;
  border: 1px solid;
  border-color: #fff #909090 #909090 #fff;
}

/* taskbar */
.taskbar {
  flex: 1;
  display: flex;
  align-items: center;
  background-color: #1f1f1f;
  border-top: 2px solid #333;
  color: #f4f4f4;
}
.tb-weather {
  width: 262px;
  flex: none;
  padding-left: 17px;
}
.tb-cell {
  width: 66px;
  height: 62px;
  flex: none;
  display: flex;
  align-items: center;
  justify-content: center;
  position: relative;
}
.tb-over {
  margin: 0 0 10px 8px;
}
.tb-view {
  margin-left: 5px;
}
.tb-search {
  width: 150px;
  height: 48px;
  margin-left: 6px;
  flex: none;
  display: flex;
  align-items: center;
  justify-content: center;
  gap: 8px;
  border-radius: 24px;
  background-color: #2d2d2d;
  font-size: 17px;
}
.running {
  position: absolute;
  left: 29px;
  bottom: 2px;
  width: 8px;
  height: 5px;
  border-radius: 3px;
  background-color: #8a8a8a;
}
.tb-active {
  width: 60px;
  height: 60px;
  position: relative;
  display: flex;
  align-items: center;
  justify-content: center;
  border-radius: 6px;
  background-color: #2e2e2e;
  box-shadow: 3px 0 0 #282828;
}
.active-mark {
  position: absolute;
  left: 18px;
  bottom: 1px;
  width: 24px;
  height: 5px;
  border-radius: 3px;
  background-color: #dba0e0;
}
.tb-badge {
  width: 24px;
  height: 24px;
  border-radius: 50%;
  background-color: #dba0e0;
  color: #222;
  font-size: 15px;
  line-height: 24px;
  text-align: center;
}
.wa-badge {
  position: absolute;
  left: 36px;
  top: 6px;
}
.help-mark {
  font-family: 'Liberation Sans', sans-serif;
  font-weight: 700;
  font-size: 26px;
  text-anchor: middle;
  fill: #fff;
}
.tray {
  flex: none;
  display: flex;
  align-items: center;
  margin-left: 19px;
}
.tray-cell {
  width: 36px;
  display: flex;
  justify-content: center;
}
.tray-globe {
  margin-left: 6px;
}
.tray-lang {
  width: 66px;
  display: flex;
  flex-direction: column;
  align-items: center;
  line-height: 24px;
  font-size: 17px;
}
.clock {
  width: 106px;
  flex: none;
  display: flex;
  flex-direction: column;
  align-items: flex-end;
  font-size: 17px;
  line-height: 24px;
  white-space: nowrap;
}
.note-badge {
  margin-left: 11px;
}
```
